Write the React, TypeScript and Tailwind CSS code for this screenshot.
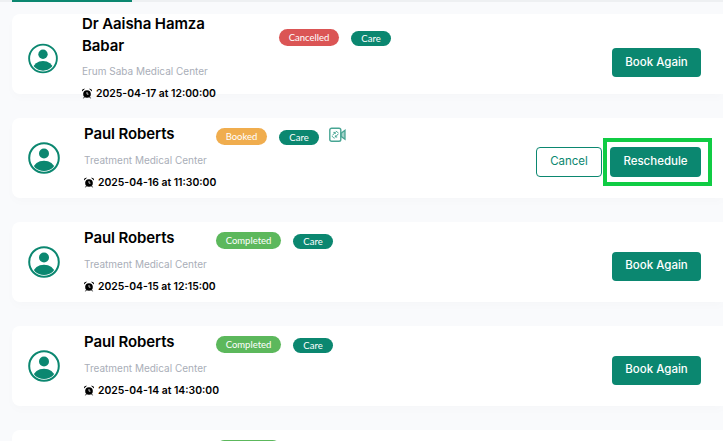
import React from "react";

const poppins = "font-['Inter','Liberation_Sans',sans-serif]";
const badgeFont = "font-['Lato','Liberation_Sans',sans-serif]";

function Avatar({ small }: { small?: boolean }) {
  const size = small ? "w-[30px] h-[31px] mt-[9px]" : "w-[32px] h-[32px]";
  return (
    <svg viewBox="0 0 32 32" className={`${size} shrink-0`}>
      <defs>
        <clipPath id="avatar-clip">
          <circle cx="16" cy="16" r="13" />
        </clipPath>
      </defs>
      <circle cx="16" cy="16" r="14.8" fill="none" stroke="#0b8770" strokeWidth="2" />
      <circle cx="16" cy="11.5" r="5" fill="#0b8770" />
      <ellipse cx="16" cy="26.5" rx="10.5" ry="7.8" fill="#0b8770" clipPath="url(#avatar-clip)" />
    </svg>
  );
}

function Alarm() {
  return (
    <svg viewBox="0 0 12 12" className="w-[10px] h-[11px] shrink-0 -mt-[2px]">
      <circle cx="6" cy="6.6" r="4.6" fill="#000" />
      <path d="M0 3.6 A2.8 2.8 0 0 1 3.6 0.4 Z M12 3.6 A2.8 2.8 0 0 0 8.4 0.4 Z" fill="#000" />
      <path d="M6 4.2v2.6h1.8" stroke="#fff" strokeWidth="0.9" fill="none" />
      <path d="M2.8 10.2 1.8 11.8M9.2 10.2l1 1.6" stroke="#000" strokeWidth="1.1" />
    </svg>
  );
}

function VideoIcon() {
  return (
    <svg viewBox="0 0 17 16" className="w-[17px] h-[16px] shrink-0 ml-[10px] -mt-[1px] opacity-75" fill="none" stroke="#0b8770">
      <rect x="0.8" y="1.2" width="11" height="13" rx="1.8" strokeWidth="1.4" />
      <path d="M12 6.2 16 3.2V12.2L12 9.4Z" strokeWidth="1.3" fill="#0b8770" fillOpacity="0.5" />
      <path d="M3.4 8.4 6.2 5.4M6.2 5.4H4.4M6.2 5.4V7M9.2 7 6.4 10M6.4 10H8.2M6.4 10V8.4" strokeWidth="1" />
      <path d="M6.8 4.2A3.6 3.6 0 0 1 9.4 6.4M5.8 11.2A3.6 3.6 0 0 1 3 9" strokeWidth="0.9" />
    </svg>
  );
}

function Badge({ label, color, w, h = "h-[17px]", ml = "" }: { label: string; color: string; w: string; h?: string; ml?: string }) {
  return (
    <span className={`${badgeFont} ${color} ${w} ${h} ${ml} shrink-0 rounded-full flex items-center justify-center text-white text-[9.5px] leading-none`}>
      {label}
    </span>
  );
}

function Primary({ label, w, h, children }: { label: string; w: string; h: string; children?: React.ReactNode }) {
  return (
    <button className={`${poppins} ${w} ${h} relative rounded-[4px] bg-[#0b8770] text-white text-[11.5px] font-medium flex items-center justify-center`}>
      {label}
      {children}
    </button>
  );
}

type Row = {
  name: string;
  center: string;
  time: string;
  status: string;
  statusColor: string;
  statusW: string;
  video?: boolean;
  reschedule?: boolean;
  first?: boolean;
  last?: boolean;
};

const paul = { name: "Paul Roberts", center: "Treatment Medical Center" };
const completed = { status: "Completed", statusColor: "bg-[#5cb85c]", statusW: "w-[65px]" };

const rows: Row[] = [
  {
    name: "Dr Aaisha Hamza Babar",
    center: "Erum Saba Medical Center",
    time: "2025-04-17 at 12:00:00",
    status: "Cancelled",
    statusColor: "bg-[#db5555]",
    statusW: "w-[60px]",
    first: true,
  },
  {
    ...paul,
    time: "2025-04-16 at 11:30:00",
    status: "Booked",
    statusColor: "bg-[#f0ad4e]",
    statusW: "w-[51px]",
    video: true,
    reschedule: true,
  },
  { ...paul, ...completed, time: "2025-04-15 at 12:15:00" },
  { ...paul, ...completed, time: "2025-04-14 at 14:30:00" },
  { ...paul, ...completed, time: "2025-04-13 at 10:00:00", last: true },
];

function Card({ r }: { r: Row }) {
  return (
    <div className="h-[80px] shrink-0 rounded-l-[8px] bg-white shadow-[0_4px_10px_rgba(0,0,0,0.015)] flex items-center pl-[16px] pr-[22px]">
      <Avatar small={r.first} />
      <div className={`flex flex-col ml-[24px] ${r.first ? "mt-[7px]" : "mb-[2px]"} ${poppins}`}>
        <div className="flex items-center">
          <div className={`${r.first ? "w-[197px] pr-[50px]" : "w-[132px]"} ${r.last ? "translate-y-[2px]" : ""} text-[15px] leading-[22px] font-semibold text-black tracking-[-0.1px]`}>{r.name}</div>
          <div className="flex mt-[5px]">
            <Badge label={r.status} color={r.statusColor} w={r.statusW} />
            <Badge label="Care" color="bg-[#0b8770]" w="w-[40px]" h="h-[15px]" ml="ml-[12px] mt-[2px]" />
            {r.video && <VideoIcon />}
          </div>
        </div>
        <div className={`${r.first ? "mt-[7px]" : "mt-[8px]"} text-[10px] leading-[14px] text-[#a9aeb8]`}>{r.center}</div>
        <div className="mt-[8px] flex items-center gap-[4px] text-[10.4px] leading-[16px] font-semibold text-black whitespace-nowrap">
          <Alarm />
          {r.time}
        </div>
      </div>
      <div className={`ml-auto flex items-center gap-[8px] ${r.first ? "mt-[17px]" : "mt-[8px]"}`}>
        {r.reschedule ? (
          <>
            <button className={`${poppins} w-[66px] h-[30px] rounded-[4px] border border-[#0b8770] bg-white text-[#0b8770] text-[11.5px] flex items-center justify-center`}>
              Cancel
            </button>
            <Primary label="Reschedule" w="w-[91px]" h="h-[30px]">
              <span className="absolute left-[-7px] right-[-11px] top-[-9px] bottom-[-9px] border-[4px] border-[#10cc44]" />
            </Primary>
          </>
        ) : (
          <Primary label="Book Again" w="w-[89px]" h="h-[29px]" />
        )}
      </div>
    </div>
  );
}

export default function App() {
  return (
    <div className="w-[723px] h-[441px] overflow-hidden bg-[#f9fafc] pl-[12px]">
      <div className="flex h-[2px] -ml-[12px] bg-[#eef0f2]">
        <div className="ml-[12px] w-[120px] bg-[#0b8770]" />
      </div>
      <div className="mt-[12px] flex flex-col gap-[24px]">
        {rows.map((r, i) => (
          <Card key={i} r={r} />
        ))}
      </div>
    </div>
  );
}
